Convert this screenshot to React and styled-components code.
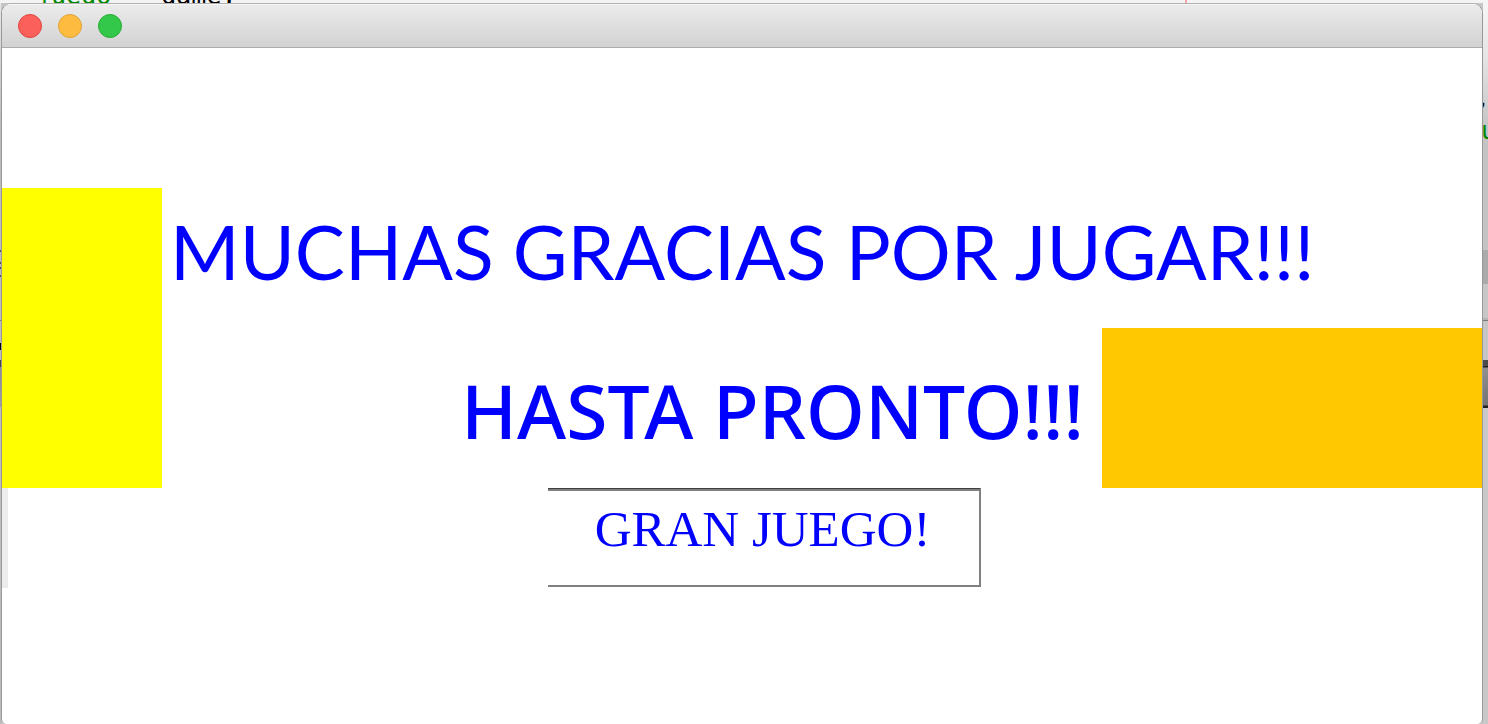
import React from "react";
import styled, { createGlobalStyle } from "styled-components";

const GlobalStyle = createGlobalStyle`
  *, *::before, *::after { box-sizing: border-box; }
  html, body, #root { height: 100%; margin: 0; }
  body { overflow: hidden; background: #c6c6c6; }
`;

const Desktop = styled.div`
  display: flex;
  flex-direction: column;
  min-height: 100vh;
  background: #c6c6c6;
`;

const EditorStrip = styled.div`
  display: flex;
  align-items: flex-end;
  height: 3px;
  overflow: hidden;
  padding-left: 36px;
  background: #f4f4f4;
  color: #000;
  font: 25px/24px "DejaVu Sans Mono", monospace;
  white-space: pre;
`;

const Code = styled.span`
  flex: none;
  height: 24px;
  margin-right: 50px;
  margin-bottom: -5px;
  color: ${(p) => p.$color || "#000"};
`;

const MarginLine = styled.span`
  width: 2px;
  height: 3px;
  margin-left: auto;
  margin-right: 301px;
  background: #f5a3a8;
`;

const Middle = styled.div`
  flex: 1;
  display: grid;
  grid-template-columns: 1px minmax(0, 1fr) 5px;
`;

const LeftEdge = styled.div`
  background: linear-gradient(
    #e8e8e8 0, #bcbcbc 120px, #bcbcbc 247px,
    #555 247px, #555 249px, #bcbcbc 249px, #bcbcbc 259px,
    #555 259px, #555 261px, #bcbcbc 261px, #bcbcbc 264px,
    #555 264px, #555 266px, #bcbcbc 266px, #bcbcbc 272px,
    #555 272px, #555 274px, #bcbcbc 274px, #bcbcbc 317px,
    #777 317px, #777 318px, #bcbcbc 318px, #bcbcbc 340px,
    #000 340px, #000 347px, #bcbcbc 347px, #bcbcbc 357px,
    #444 357px, #444 364px, #8d8d95 364px, #9c9ca2 404px,
    #bcbcbc 404px
  );
`;

const RightEdge = styled.div`
  overflow: hidden;
  padding-top: 80px;
  background: linear-gradient(
    #f6f6f6 0, #e6e6e6 50px, #c4c4c4 125px, #c4c4c4 247px,
    #aaa 247px, #aaa 281px, #c6c6c6 281px, #c6c6c6 315px,
    #b4b4b4 315px, #b4b4b4 317px, #777 317px, #777 318px,
    #c6c6c6 318px, #c6c6c6 357px, #4c4c4c 357px, #4c4c4c 363px,
    #222 363px, #222 364px, #909090 365px, #747474 402px,
    #222 403px, #222 405px, #c8c8c8 405px
  );
  font: 25px/32px "DejaVu Sans Mono", monospace;
`;

const EdgeCode = styled.span`
  display: block;
  width: 15px;
  height: 32px;
  margin-left: ${(p) => p.$shift}px;
  color: ${(p) => p.$color};
`;

const Window = styled.main`
  display: flex;
  flex-direction: column;
  min-width: 0;
  border: solid #999;
  border-width: 1px 1px 0;
  border-top-color: #b0b0b0;
  border-radius: 10px 10px 5px 5px;
  background: #fff;
  overflow: hidden;
`;

const TitleBar = styled.header`
  display: flex;
  align-items: center;
  gap: 16px;
  height: 44px;
  padding-left: 16px;
  border-top: 1px solid #f6f6f6;
  border-bottom: 1px solid #acacac;
  background: linear-gradient(#ebebeb, #d2d2d2);
`;

const WindowButton = styled.button`
  width: 24px;
  height: 24px;
  padding: 0;
  border: 1px solid ${(p) => p.$edge};
  border-radius: 50%;
  background: ${(p) => p.$fill};
`;

const Board = styled.section`
  display: grid;
  grid-template-columns: 160px minmax(0, 1fr) 380px;
  grid-template-rows: 140px 160px;
  margin-top: 140px;
`;

const YellowBlock = styled.div`
  grid-row: 1 / 3;
  background: #ff0;
`;

const OrangeBlock = styled.div`
  background: #ffc800;
`;

const Thanks = styled.h1`
  grid-column: 2 / 4;
  margin: 0;
  padding: 19px 0 0 8px;
  color: #00f;
  font: 400 75px/88px Lato, sans-serif;
  white-space: nowrap;
`;

const Farewell = styled.h2`
  margin: 0;
  padding: 38px 18px 0 0;
  color: #00f;
  font: 500 75px/88px "Noto Sans", sans-serif;
  text-align: right;
  white-space: nowrap;
`;

const Footer = styled.section`
  display: flex;
  height: 100px;
  border-left: 6px solid #ececec;
`;

const PraiseButton = styled.button`
  width: 433px;
  height: 99px;
  margin-left: 540px;
  padding: 0 2px 16px 0;
  border: solid #808080;
  border-width: 1px 2px 2px 0;
  border-top-color: #404040;
  border-radius: 0;
  background: #fff;
  box-shadow: inset 0 2px #808080;
  color: #00f;
  font: 400 51px/56px "Liberation Serif", serif;
  white-space: nowrap;
`;

export default function App() {
  return (
    <>
      <GlobalStyle />
      <Desktop>
        <EditorStrip aria-hidden="true">
          <Code $color="#008a00">juego</Code>
          <Code>game;</Code>
          <MarginLine />
        </EditorStrip>
        <Middle>
          <LeftEdge />
          <Window>
            <TitleBar>
              <WindowButton aria-label="Cerrar" $fill="#fc605b" $edge="#e0443e" />
              <WindowButton aria-label="Minimizar" $fill="#fdbc40" $edge="#dea236" />
              <WindowButton aria-label="Ampliar" $fill="#34c84a" $edge="#27aa35" />
            </TitleBar>
            <Board>
              <YellowBlock />
              <Thanks>MUCHAS GRACIAS POR JUGAR!!!</Thanks>
              <Farewell>HASTA PRONTO!!!</Farewell>
              <OrangeBlock />
            </Board>
            <Footer>
              <PraiseButton>GRAN JUEGO!</PraiseButton>
            </Footer>
          </Window>
          <RightEdge aria-hidden="true">
            <EdgeCode $shift={-8} $color="#000">,</EdgeCode>
            <EdgeCode $shift={-2} $color="#080">u</EdgeCode>
          </RightEdge>
        </Middle>
      </Desktop>
    </>
  );
}
